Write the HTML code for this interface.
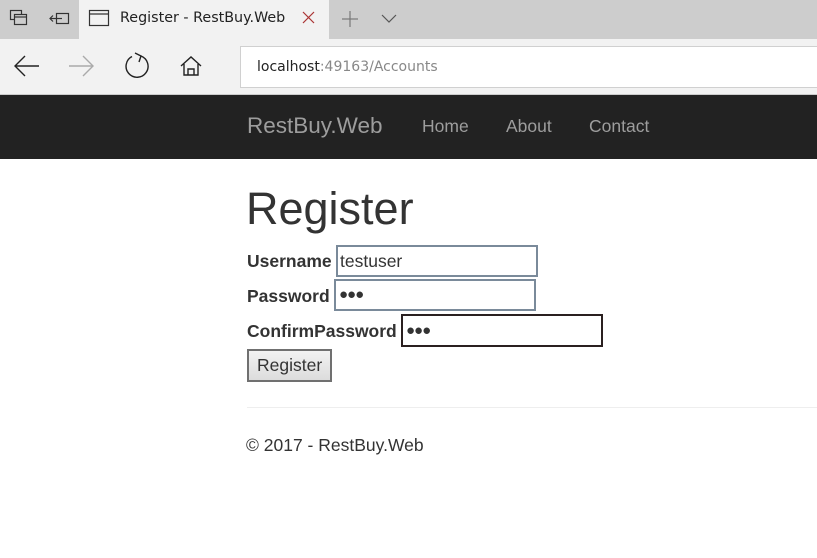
<!DOCTYPE html>
<html><head><meta charset="utf-8">
<style>
*{margin:0;padding:0;box-sizing:border-box}
body{width:817px;height:558px;overflow:hidden;background:#fff;font-family:"Liberation Sans",Arial,sans-serif;position:relative;color:#333}
.a{position:absolute;white-space:nowrap}
</style></head><body>
<div class="a" style="left:0;top:0;width:817px;height:39px;background:#cdcdcd"></div>
<div class="a" style="left:79px;top:0;width:250px;height:39px;background:#f2f2f2"></div>
<svg class="a" style="left:0;top:0" width="817" height="39">
 <g fill="none" stroke="#333" stroke-width="1.2">
  <rect x="10.5" y="10.5" width="11" height="9"/><rect x="14.5" y="14.5" width="12" height="10" fill="#cdcdcd"/><line x1="14.5" y1="17" x2="26.5" y2="17"/>
  <rect x="56.5" y="13.5" width="12" height="10"/><line x1="50" y1="18.5" x2="62" y2="18.5"/><polyline points="53,15.5 50,18.5 53,21.5"/>
  <rect x="89.5" y="10.5" width="19" height="15"/><line x1="89.5" y1="14" x2="108.5" y2="14"/>
  <line x1="303" y1="12" x2="314" y2="23" stroke="#a33"/><line x1="314" y1="12" x2="303" y2="23" stroke="#a33"/>
  <line x1="342" y1="19" x2="358" y2="19" stroke="#777"/><line x1="350" y1="11" x2="350" y2="27" stroke="#777"/>
  <polyline points="382,15 389,22 396,15" stroke="#555"/>
 </g>
</svg>
<div class="a" style="left:120px;top:10px;color:#222;font-family:'DejaVu Sans','Liberation Sans',sans-serif;font-size:14.3px">Register - RestBuy.Web</div>
<div class="a" style="left:0;top:39px;width:817px;height:56px;background:#f2f2f2;border-bottom:1px solid #ccc"></div>
<svg class="a" style="left:0;top:39px" width="240" height="56">
 <g fill="none" stroke-width="1.4">
  <line x1="15" y1="27" x2="39" y2="27" stroke="#222"/><polyline points="25,17 15,27 25,37" stroke="#222"/>
  <line x1="69" y1="27" x2="93" y2="27" stroke="#aaa"/><polyline points="83,17 93,27 83,37" stroke="#aaa"/>
  <path d="M132 17.5 A11 11 0 1 0 141 17" stroke="#222"/><polyline points="135,14 141,17 139,23" stroke="#222"/>
  <path d="M181 27 L191 18 L201 27 M184 25 V36 H198 V25 M188 36 V30 H194 V36" stroke="#222"/>
 </g>
</svg>
<div class="a" style="left:240px;top:46px;width:590px;height:42px;background:#fff;border:1px solid #d0d0d0"></div>
<div class="a" style="left:257px;top:59px;color:#222;font-family:'DejaVu Sans','Liberation Sans',sans-serif;font-size:14px">localhost<span style="color:#888">:49163/Accounts</span></div>
<div class="a" style="left:0;top:95px;width:817px;height:64px;background:#222"></div>
<div class="a" style="left:247px;top:113px;font-size:22.5px;color:#9d9d9d">RestBuy.Web</div>
<div class="a" style="left:422px;top:116px;font-size:17.5px;color:#9d9d9d">Home</div>
<div class="a" style="left:506px;top:116px;font-size:17.5px;color:#9d9d9d">About</div>
<div class="a" style="left:589px;top:116px;font-size:17.5px;color:#9d9d9d">Contact</div>
<div class="a" style="left:246px;top:184px;font-size:45px;color:#333;line-height:50px">Register</div>
<div class="a" style="left:247px;top:251px;font-size:17.5px;font-weight:bold;color:#333">Username</div>
<div class="a" style="left:336px;top:245px;width:202px;height:32px;border:2px solid #7a8a9a"></div>
<div class="a" style="left:340px;top:251px;font-size:17.5px;color:#333">testuser</div>
<div class="a" style="left:247px;top:286px;font-size:17.5px;font-weight:bold;color:#333">Password</div>
<div class="a" style="left:334px;top:279px;width:202px;height:32px;border:2px solid #7a8a9a"></div>
<div class="a" style="left:339px;top:286px;font-size:15px;color:#333;letter-spacing:-1px">●●●</div>
<div class="a" style="left:247px;top:321px;font-size:17.5px;font-weight:bold;color:#333">ConfirmPassword</div>
<div class="a" style="left:401px;top:314px;width:202px;height:33px;border:2px solid #2a2020"></div>
<div class="a" style="left:406px;top:322px;font-size:15px;color:#333;letter-spacing:-1px">●●●</div>
<div class="a" style="left:247px;top:349px;width:85px;height:33px;border:2px solid #707070;background:linear-gradient(#f2f2f2,#dcdcdc)"></div>
<div class="a" style="left:257px;top:355px;font-size:17.5px;color:#333">Register</div>
<div class="a" style="left:247px;top:407px;width:570px;height:1px;background:#eee"></div>
<div class="a" style="left:246px;top:435px;font-size:17.5px;color:#333">© 2017 - RestBuy.Web</div>
</body></html>
